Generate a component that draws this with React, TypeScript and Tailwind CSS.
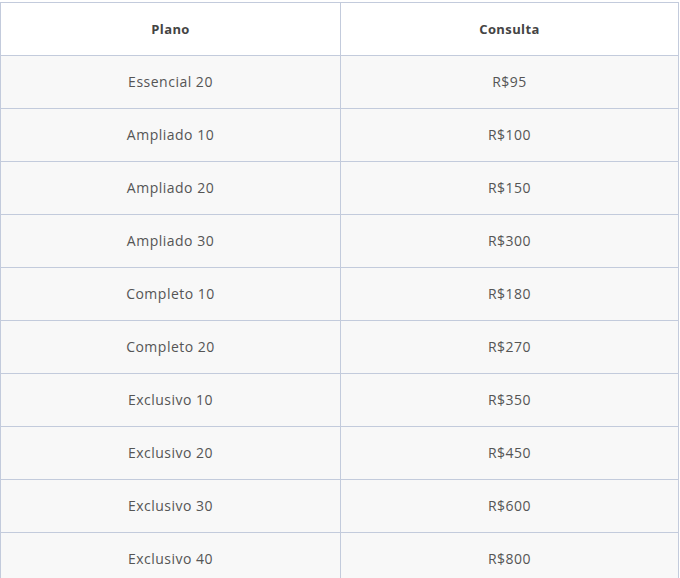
import React from 'react';

const plans = [
  { name: 'Essencial 20', price: 'R$95' },
  { name: 'Ampliado 10', price: 'R$100' },
  { name: 'Ampliado 20', price: 'R$150' },
  { name: 'Ampliado 30', price: 'R$300' },
  { name: 'Completo 10', price: 'R$180' },
  { name: 'Completo 20', price: 'R$270' },
  { name: 'Exclusivo 10', price: 'R$350' },
  { name: 'Exclusivo 20', price: 'R$450' },
  { name: 'Exclusivo 30', price: 'R$600' },
  { name: 'Exclusivo 40', price: 'R$800' },
];

export default function App() {
  return (
    <div className="min-h-screen bg-white pt-[2px] font-['Open_Sans',sans-serif]">
      <table className="w-[679px] table-fixed border-collapse border border-[#c3cbdc]">
        <thead>
          <tr className="bg-white">
            <th className="h-[53px] w-[340px] border border-[#c3cbdc] pt-[2px] text-center text-[13px] font-bold tracking-[0.4px] text-[#444]">
              Plano
            </th>
            <th className="h-[53px] border border-[#c3cbdc] pt-[2px] text-center text-[13px] font-bold tracking-[0.4px] text-[#444]">
              Consulta
            </th>
          </tr>
        </thead>
        <tbody>
          {plans.map((p) => (
            <tr key={p.name} className="bg-[#f8f8f8]">
              <td className="h-[53px] border border-[#c3cbdc] pb-[2px] text-center text-[14px] tracking-[0.5px] text-[#555]">
                {p.name}
              </td>
              <td className="h-[53px] border border-[#c3cbdc] pb-[2px] text-center text-[14px] tracking-[0.5px] text-[#555]">
                {p.price}
              </td>
            </tr>
          ))}
        </tbody>
      </table>
    </div>
  );
}
